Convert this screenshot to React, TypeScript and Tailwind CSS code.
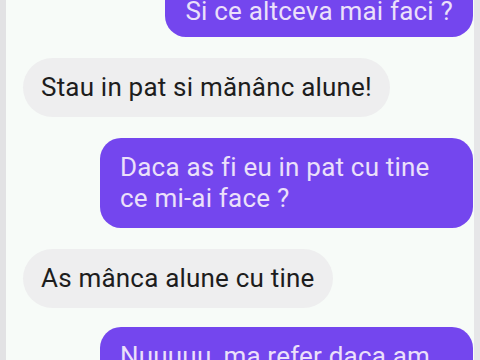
export default function App() {
  const messages: { mine: boolean; text: string }[] = [
    { mine: true, text: 'Si ce altceva mai faci ?' },
    { mine: false, text: 'Stau in pat si mănânc alune!' },
    { mine: true, text: 'Daca as fi eu in pat cu tine ce mi-ai face ?' },
    { mine: false, text: 'As mânca alune cu tine' },
    { mine: true, text: 'Nuuuuu, ma refer daca am face ceva impreuna' },
  ];

  return (
    <div className="w-[480px] h-[360px] overflow-hidden flex bg-[#e4e4e6]" style={{ fontFamily: 'Roboto, "Noto Sans", sans-serif' }}>
      <div className="w-[6px] shrink-0 bg-[#e2e2e4]" />
      <div className="flex-1 bg-[#f7fbf8] flex flex-col gap-[21px] pl-[17px] pr-[1px]">
        {messages.map((m, i) => (
          <div
            key={i}
            className={`${i === 0 ? '-mt-[22px]' : ''} ${i === 4 ? '-mt-[2px]' : ''} flex ${m.mine ? 'justify-end' : 'justify-start'}`}
          >
            {m.mine ? (
              <div
                className={`max-w-[373px] bg-[#7446ee] text-[#ebe0fa] rounded-[21px] px-[20px] ${i === 0 ? 'pt-[18px] pb-[10px]' : 'py-[14px]'} text-[26px] leading-[31px] tracking-[0.2px]`}
              >
                {m.text}
              </div>
            ) : (
              <div className="bg-[#eeeeef] text-[#1d1d1d] rounded-full px-[18px] py-[14px] text-[26px] leading-[31px] tracking-[0.2px]">
                {m.text}
              </div>
            )}
          </div>
        ))}
      </div>
      <div className="w-[6px] shrink-0 bg-[#e6e6e8]" />
    </div>
  );
}
